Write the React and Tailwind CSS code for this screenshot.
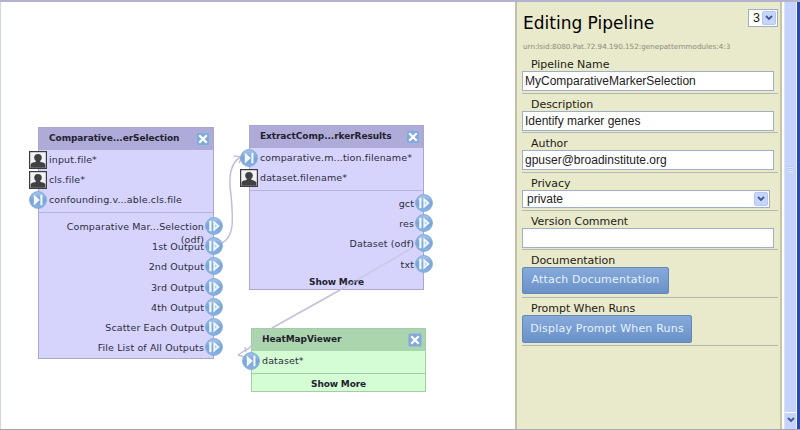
const sans = "font-['DejaVu_Sans','Verdana',sans-serif]";

function Port({ input }) {
  return (
    <svg viewBox="0 0 18 18" className="relative z-10 block h-[18px] w-[18px] shrink-0">
      <defs>
        <linearGradient id="portFill" x1="0" y1="0" x2="0" y2="1">
          <stop offset="0" stopColor="#a6c6e8" />
          <stop offset="0.5" stopColor="#79a5d6" />
          <stop offset="1" stopColor="#86b4e4" />
        </linearGradient>
      </defs>
      <circle cx="9" cy="9" r="8.4" fill="url(#portFill)" stroke="#7ea6d6" strokeWidth="0.9" />
      {input ? (
        <g fill="#f4f9ff">
          <path d="M4.800 3.500v11L10.800 9z" />
          <rect x="11.4" y="3.8" width="2" height="10.4" />
        </g>
      ) : (
        <g fill="#f4f9ff">
          <rect x="4.3" y="3.8" width="2.2" height="10.4" />
          <path d="M8.400 3.500v11L14.800 9z" />
          <path d="M9.800 7v4l2.300-2z" fill="#b4cfee" />
        </g>
      )}
    </svg>
  );
}

function Person() {
  return (
    <svg viewBox="0 0 18 18" className="relative z-10 block h-[18px] w-[18px] shrink-0">
      <rect x="0.6" y="0.6" width="16.8" height="16.8" fill="#f2f2f4" stroke="#3c3c40" strokeWidth="1.2" />
      <path
        d="M9 3c2.500 0 3.900 1.500 3.800 3.700-.1 1.500-.8 2.500-1.600 3.200v.9c1.300.5 4.600.9 5.200 2.600V16.800H1.600v-3.400c.6-1.700 3.900-2.100 5.200-2.600V9.900C6 9.200 5.300 8.200 5.200 6.700 5.100 4.500 6.500 3 9 3z"
        fill="#414144"
      />
    </svg>
  );
}

function Close() {
  return (
    <svg viewBox="0 0 14 14" className="block h-[14px] w-[14px] shrink-0">
      <rect x="0.4" y="0.4" width="13.2" height="13.2" rx="2" fill="#84a9d8" stroke="#9cbbe2" strokeWidth="0.8" />
      <path d="M4 4l6 6M10 4l-6 6" stroke="#fff" strokeWidth="2.200" strokeLinecap="square" />
    </svg>
  );
}

function Input({ icon, children }) {
  return (
    <div className="-ml-[10px] flex h-5 items-center gap-[2px]">
      {icon === 'person' ? <Person /> : <Port input />}
      <span className="whitespace-nowrap">{children}</span>
    </div>
  );
}

function Output({ children, extra }) {
  return (
    <div className="-mr-[10px] flex h-[20.200px] items-start justify-end gap-[1px]">
      <div className="pt-1 text-right leading-[13px] whitespace-nowrap">
        {children}
        {extra && <div>{extra}</div>}
      </div>
      <div className="pt-px">
        <Port />
      </div>
    </div>
  );
}

function Node({ place, title, colors, head, children }) {
  return (
    <section
      className={`absolute flex flex-col border text-[9.500px] tracking-[0.120px] text-[#2c2c3c] ${place} ${colors}`}
    >
      <header className={`flex h-[22px] shrink-0 items-center justify-between pr-[3px] pl-[10px] text-[9px] font-bold tracking-[-0.080px] text-[#22222e] ${head}`}>
        <span className="whitespace-nowrap">{title}</span>
        <Close />
      </header>
      {children}
    </section>
  );
}

const purple = 'border-[#aaa6cc] bg-[#d6d4fd]';
const purpleHead = 'bg-[#afabd9]';

function Chevron() {
  return (
    <span className="flex h-full w-[14px] items-center justify-center rounded-[2px] border border-[#b4c6f4] bg-[#c5d5fb]">
      <svg viewBox="0 0 8 6" className="h-[6px] w-[8px]">
        <path d="M1 1l3 3 3-3" fill="none" stroke="#42598c" strokeWidth="1.900" />
      </svg>
    </span>
  );
}

function Field({ label, height, children }) {
  return (
    <div className={`mr-[2px] flex flex-col items-start border-b border-[#b4b8b4] ${height}`}>
      <label className="flex h-[17px] shrink-0 items-end pl-[9px] text-[11px] leading-[12px] tracking-[-0.050px]">{label}</label>
      {children}
    </div>
  );
}

function TextBox({ children }) {
  return (
    <div className="flex h-5 w-[252px] items-center border border-[#9fb0c4] bg-white pl-[2px] font-['Liberation_Sans',Arial,sans-serif] text-[12px] text-[#222]">
      {children}
    </div>
  );
}

function Button({ children, size }) {
  return (
    <button
      className={`flex items-center justify-center rounded-[2px] border border-[#6486b8] bg-linear-to-b from-[#86a9da] to-[#6a92c8] text-[11px] tracking-[0.200px] whitespace-nowrap text-[#e6f2ff] ${size}`}
    >
      {children}
    </button>
  );
}

export default function App() {
  return (
    <div className={`flex h-[430px] w-[800px] flex-col overflow-hidden border-t-2 border-b border-t-[#b3b3d0] border-b-[#a8a4b4] bg-white ${sans}`}>
      <div className="flex min-h-0 flex-1">
        <main className="relative -mt-[2px] w-[515px] shrink-0 border-l border-[#d4d4ee]">
          <div className="absolute top-0 -left-px h-[430px] w-[515px]">
            <Node place="left-[38px] top-[127px] h-[232px] w-[176px]" colors={purple} head={purpleHead} title="Comparative...erSelection">
              <div className="h-[63px] shrink-0 border-b border-[#b6b2dc]">
                <Input icon="person">input.file*</Input>
                <Input icon="person">cls.file*</Input>
                <Input>confounding.v...able.cls.file</Input>
              </div>
              <div className="pt-[3px]">
                <Output extra="(odf)">Comparative Mar...Selection</Output>
                <Output>1st Output</Output>
                <Output>2nd Output</Output>
                <Output>3rd Output</Output>
                <Output>4th Output</Output>
                <Output>Scatter Each Output</Output>
                <Output>File List of All Outputs</Output>
              </div>
            </Node>
            <Node place="left-[249px] top-[125px] h-[165px] w-[175px]" colors={purple} head={purpleHead} title="ExtractComp...rkerResults">
              <div className="h-[43px] shrink-0 border-b border-[#b6b2dc]">
                <Input>comparative.m...tion.filename*</Input>
                <Input icon="person">dataset.filename*</Input>
              </div>
              <div className="pt-[2px]">
                <Output>gct</Output>
                <Output>res</Output>
                <Output>Dataset (odf)</Output>
                <Output>txt</Output>
              </div>
              <div className="pt-px text-center text-[9px] leading-[14px] font-bold tracking-[-0.150px] text-[#22222e]">Show More</div>
            </Node>
            <Node
              place="left-[251px] top-[328px] h-[64px] w-[175px]"
              colors="border-[#a4cca8] bg-[#d4fdd4]"
              head="bg-[#abd5ad]"
              title="HeatMapViewer"
            >
              <div className="h-[23px] shrink-0 border-b border-[#a8c8ac]">
                <Input>dataset*</Input>
              </div>
              <div className="pt-[3px] text-center text-[9px] leading-[14px] font-bold tracking-[-0.150px] text-[#22222e]">Show More</div>
            </Node>
            <svg viewBox="0 0 515 430" className="absolute inset-0 h-[430px] w-[515px]" fill="none" stroke="#c2bedb" strokeWidth="1.500">
              <path d="M222 243C235 236 233 218 231 195C228 175 231 162 241 157M234 156L242 157L239 163" />
              <path d="M340 290L272 328M251 346L247 350M238 355L245 357M245 347L246 352M238 355L247 349" />
              <path d="M412 248L340 290M272 328L251 346" strokeOpacity="0.6" />
            </svg>
          </div>
        </main>
        <aside className="w-[267px] shrink-0 border-r-2 border-l-2 border-r-[#c6c6a4] border-l-[#c0c0ac] bg-[#e9e9cc] pl-[5px] text-[#1c1c14]">
          <div className="flex h-[36px] justify-between pr-[2px]">
            <h1 className="pt-[9px] pl-px text-[17px] leading-[24px] text-black">Editing Pipeline</h1>
            <div className="mt-[7px] flex h-[18px] w-[30px] items-center justify-between border border-[#9fb0c4] bg-white p-px pl-[4px] font-['Liberation_Sans',Arial,sans-serif] text-[12.500px]">
              3<Chevron />
            </div>
          </div>
          <div className="h-[16px] pt-[3px] pl-px text-[7.200px] leading-[11px] whitespace-nowrap text-[#8c8c78]">
            urn:lsid:8080.Pat.72.94.190.152:genepatternmodules:4:3
          </div>
          <Field label="Pipeline Name" height="h-[40px]"><TextBox>MyComparativeMarkerSelection</TextBox></Field>
          <Field label="Description" height="h-[39px]"><TextBox>Identify marker genes</TextBox></Field>
          <Field label="Author" height="h-[40px]"><TextBox>gpuser@broadinstitute.org</TextBox></Field>
          <Field label="Privacy" height="h-[38px]">
            <div className="flex h-[18px] w-[248px] items-center justify-between border border-[#9fb0c4] bg-white p-px pl-[4px] font-['Liberation_Sans',Arial,sans-serif] text-[12px] text-[#222]">
              private<Chevron />
            </div>
          </Field>
          <Field label="Version Comment" height="h-[39px]"><TextBox /></Field>
          <Field label="Documentation" height="h-[48px]"><Button size="h-[27px] w-[147px]">Attach Documentation</Button></Field>
          <Field label="Prompt When Runs" height="h-[48px]"><Button size="h-[28px] w-[170px]">Display Prompt When Runs</Button></Field>
        </aside>
        <div className="ml-[2px] flex w-[13px] shrink-0 flex-col border-x border-l-[#d8e2fc] border-r-[#f0f4ff] bg-[#c6d4fc]">
          <div className="flex flex-1 flex-col items-center pt-[164px]">
            <div className="h-[6px] w-[5px] bg-[repeating-linear-gradient(0deg,#dfe8ff_0_1px,#b4c6f4_1px_2px)]" />
          </div>
          <div className="mb-[2px] flex h-[15px] items-center justify-center border-t border-white">
            <svg viewBox="0 0 8 6" className="h-[6px] w-[8px]">
              <path d="M1 1l3 3 3-3" fill="none" stroke="#42598c" strokeWidth="1.900" />
            </svg>
          </div>
        </div>
        <div className="flex-1 bg-[#2848b8]" />
      </div>
    </div>
  );
}
